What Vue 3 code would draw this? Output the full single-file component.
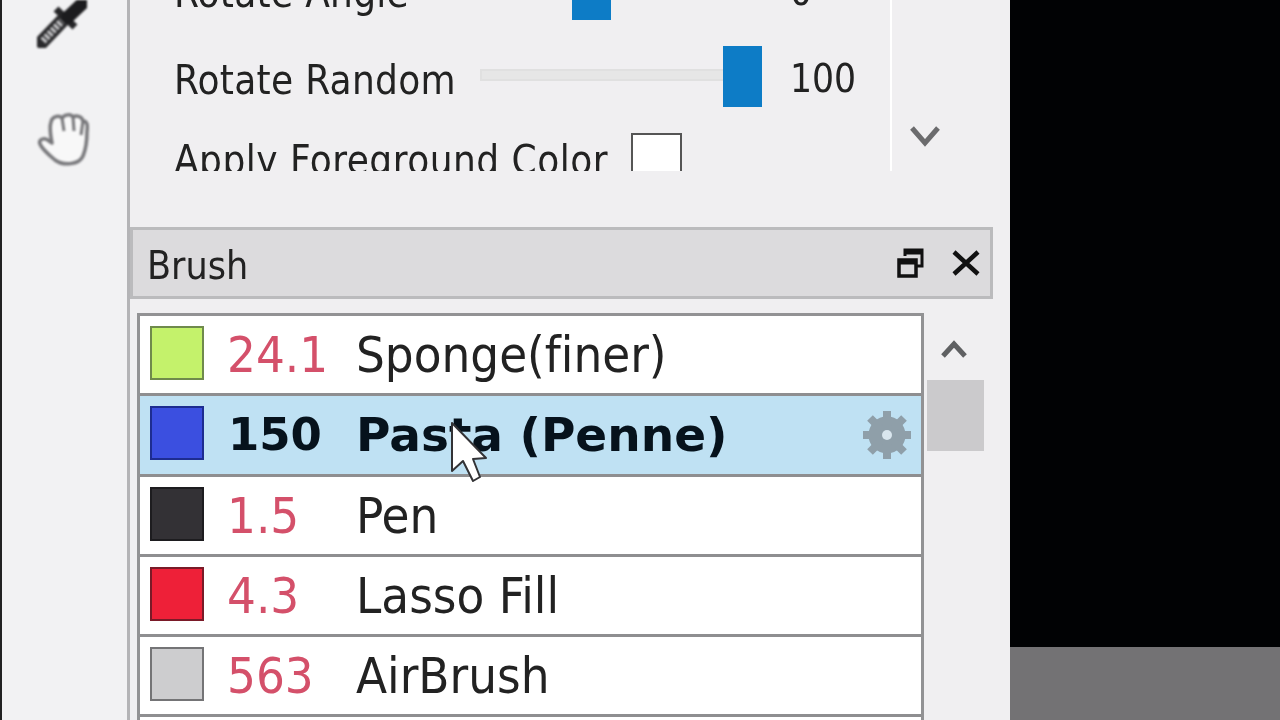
<script setup>
const sliders = [
  { label: 'Rotate Angle', value: '0', thumb: 92 },
  { label: 'Rotate Random', value: '100', thumb: 243 }
]
const brushes = [
  { color: '#c4f26b', edge: '#6f8a4c', size: '24.1', name: 'Sponge(finer)' },
  { color: '#3b4fe0', edge: '#1d2c90', size: '150', name: 'Pasta (Penne)', active: true },
  { color: '#333135', edge: '#1d1c1f', size: '1.5', name: 'Pen' },
  { color: '#ee2038', edge: '#7a1a28', size: '4.3', name: 'Lasso Fill' },
  { color: '#cdcdcf', edge: '#747476', size: '563', name: 'AirBrush' },
  { color: '#ffffff', edge: '#747476', size: '', name: '' }
]
</script>

<template>
  <div class="screen">
    <aside class="toolbar">
      <svg class="tool dropper" width="50" height="48" viewBox="0 0 50 48">
        <path d="M5 42 L25 21" stroke="#2a2a2c" stroke-width="14" stroke-linecap="round"/>
        <path d="M6 41 L25 21" stroke="#c8c8ca" stroke-width="7" stroke-dasharray="3 1.5"/>
        <path d="M19 9 L38 27" stroke="#252527" stroke-width="7"/>
        <path d="M31 17 L47 2" stroke="#1c1c1e" stroke-width="13" stroke-linecap="round"/>
      </svg>
      <svg class="tool hand" width="52" height="56" viewBox="0 0 52 56">
        <path d="M18 47 C12 42 5 36 3 31 C1 26 8 24 12 28 L15 30 C13 20 13 12 14 9 C15 3 22 2 25 5 C28 1 34 1 36 4 C39 2 45 3 46 8 C50 8 51 12 50 18 C50 28 49 36 46 43 C42 52 26 53 18 47 Z" fill="#f8f8f8" stroke="#77777a" stroke-width="3.5" stroke-linejoin="round"/>
        <path d="M25 5 L27 18 M36 4 L37 18 M46 8 L44 22" fill="none" stroke="#77777a" stroke-width="3"/>
      </svg>
    </aside>

    <main class="panel">
      <section class="props">
        <div class="props-body">
          <div v-for="s in sliders" :key="s.label" class="prop-row">
            <span class="label">{{ s.label }}</span>
            <div class="slider">
              <div class="track"></div>
              <div class="thumb" :style="{ left: s.thumb + 'px' }"></div>
            </div>
            <span class="value">{{ s.value }}</span>
          </div>
          <div class="apply-row">
            <span class="label">Apply Foreground Color</span>
            <span class="check"></span>
          </div>
        </div>
        <div class="props-scroll">
          <svg width="32" height="26" viewBox="0 0 32 26">
            <path d="M3 4 L16 19 L29 4" fill="none" stroke="#6b6b6d" stroke-width="5"/>
          </svg>
        </div>
      </section>

      <section class="brush">
        <header class="brush-head">
          <span class="brush-title">Brush</span>
          <svg class="restore" width="28" height="30" viewBox="0 0 28 30">
            <path d="M9 8 V2 H26 V18 H20" fill="none" stroke="#111" stroke-width="3"/>
            <path d="M9 4 H26" stroke="#111" stroke-width="5"/>
            <rect x="3" y="12" width="17" height="16" fill="none" stroke="#111" stroke-width="3.5"/>
            <path d="M3 14 H20" stroke="#111" stroke-width="5"/>
          </svg>
          <svg class="close" width="28" height="26" viewBox="0 0 28 26">
            <path d="M2 2 L26 24 M26 2 L2 24" stroke="#111" stroke-width="4.5"/>
          </svg>
        </header>

        <div class="brush-body">
          <div class="list">
            <div v-for="b in brushes" :key="b.color + b.name" class="item" :class="{ active: b.active }">
              <span class="swatch" :style="{ background: b.color, borderColor: b.edge }"></span>
              <span class="size">{{ b.size }}</span>
              <span class="name">{{ b.name }}</span>
              <svg v-if="b.active" class="gear" width="50" height="50" viewBox="0 0 50 50">
                <circle cx="25" cy="25" r="13" fill="none" stroke="#8f9fa9" stroke-width="11"/>
                <g stroke="#8f9fa9" stroke-width="8">
                  <path d="M25 1 V49 M1 25 H49 M8 8 L42 42 M42 8 L8 42"/>
                </g>
                <circle cx="25" cy="25" r="5" fill="#d9e6ee"/>
              </svg>
            </div>
          </div>
          <div class="scrollbar">
            <svg class="up" width="28" height="22" viewBox="0 0 28 22">
              <path d="M3 18 L14 6 L25 18" fill="none" stroke="#5f6062" stroke-width="5"/>
            </svg>
            <div class="scroll-thumb"></div>
          </div>
        </div>
      </section>

      <svg class="cursor" width="42" height="64" viewBox="0 0 42 64">
        <path d="M3 2 L3 50 L14 40 L24 60 L31 56 L24 38 L37 37 Z" fill="#fff" stroke="#333336" stroke-width="2" stroke-linejoin="round"/>
      </svg>
    </main>

    <div class="viewport">
      <div class="canvas"></div>
      <div class="canvas-foot"></div>
    </div>
  </div>
</template>

<style>
html, body { margin: 0; overflow: hidden; }
</style>

<style scoped>
.screen {
  width: 1280px;
  height: 720px;
  display: flex;
  overflow: hidden;
  background: #f0eff1;
  color: #222;
  font-family: "DejaVu Sans", sans-serif;
  font-stretch: condensed;
  font-variant-ligatures: none;
  font-size: 40px;
  filter: blur(0.6px);
}
.toolbar {
  width: 130px;
  flex: none;
  box-sizing: border-box;
  border-left: 2px solid #222;
  border-right: 3px solid #b4b4b6;
  background: #f2f2f3;
  padding-left: 35px;
  display: flex;
  flex-direction: column;
  gap: 65px;
}
.tool { filter: blur(0.8px); }
.panel {
  width: 880px;
  flex: none;
  position: relative;
  display: flex;
  flex-direction: column;
}
.props {
  height: 171px;
  width: 862px;
  display: flex;
  overflow: hidden;
  flex: none;
}
.props-body {
  width: 762px;
  margin-top: -41px;
  padding-left: 44px;
  box-sizing: border-box;
  border-right: 2px solid #fff;
  display: flex;
  flex-direction: column;
  gap: 26px;
}
.prop-row {
  height: 61px;
  display: flex;
  align-items: center;
  flex: none;
}
.label { white-space: nowrap; line-height: 1; letter-spacing: 0.3px; }
.prop-row .label { width: 306px; flex: none; margin-top: 6px; }
.slider {
  width: 283px;
  height: 61px;
  position: relative;
  flex: none;
}
.track {
  position: absolute;
  left: 0;
  right: 30px;
  top: 23px;
  height: 8px;
  background: #e6e6e6;
  border: 2px solid #e0e0e0;
}
.thumb {
  position: absolute;
  top: 0;
  width: 39px;
  height: 61px;
  background: #0d7cc6;
}
.value { margin-left: 27px; line-height: 1; margin-top: 6px; font-size: 38.5px; }
.apply-row {
  display: flex;
  align-items: center;
  gap: 23px;
  flex: none;
}
.apply-row .label { margin-top: 2px; letter-spacing: 0.5px; }
.check {
  width: 47px;
  height: 47px;
  background: #fff;
  border: 2px solid #555;
  flex: none;
}
.props-scroll {
  flex: 1;
  display: flex;
  justify-content: center;
  padding-top: 124px;
  box-sizing: border-box;
}
.props-scroll svg { margin-left: -34px; }
.brush { margin-top: 56px; }
.brush-head {
  width: 863px;
  height: 72px;
  box-sizing: border-box;
  border: 3px solid #bbbbbd;
  background: #dcdbdd;
  display: flex;
  align-items: center;
  padding-left: 14px;
}
.brush-title { flex: 1; font-size: 39px; padding-top: 5px; }
.restore { margin-right: 28px; }
.close { margin-right: 10px; }
.brush-body {
  display: flex;
  margin-top: 14px;
  padding-left: 7px;
}
.list {
  width: 787px;
  box-sizing: border-box;
  border: 3px solid #929294;
  border-bottom: 0;
  flex: none;
  font-size: 50.5px;
}
.item {
  height: 77.3px;
  background: #fff;
  border-bottom: 3px solid #8e8e90;
  display: flex;
  align-items: center;
  padding-left: 10px;
}
.item.active {
  background: #bfe1f3;
  color: #06121c;
  font-stretch: normal;
  font-size: 47px;
  font-weight: 700;
}
.swatch {
  width: 50px;
  height: 50px;
  margin-bottom: 3px;
  border: 2px solid;
  flex: none;
}
.size {
  width: 129px;
  margin-left: 23px;
  flex: none;
  color: #d4506a;
}
.active .size { color: #06121c; font-size: 45px; width: 128px; margin-left: 24px; }
.name { white-space: nowrap; flex: 1; }
.gear { margin-right: 9px; }
.scrollbar {
  padding-left: 3px;
  display: flex;
  flex-direction: column;
}
.up { margin: 25px 0 0 13px; }
.scroll-thumb {
  width: 57px;
  height: 71px;
  margin-top: 20px;
  background: #cbcacc;
}
.cursor {
  position: absolute;
  left: 319px;
  top: 421px;
}
.viewport {
  flex: 1;
  display: flex;
  flex-direction: column;
  background: #000;
}
.canvas { height: 647px; background: #010204; flex: none; }
.canvas-foot { flex: 1; background: #737274; }
</style>
